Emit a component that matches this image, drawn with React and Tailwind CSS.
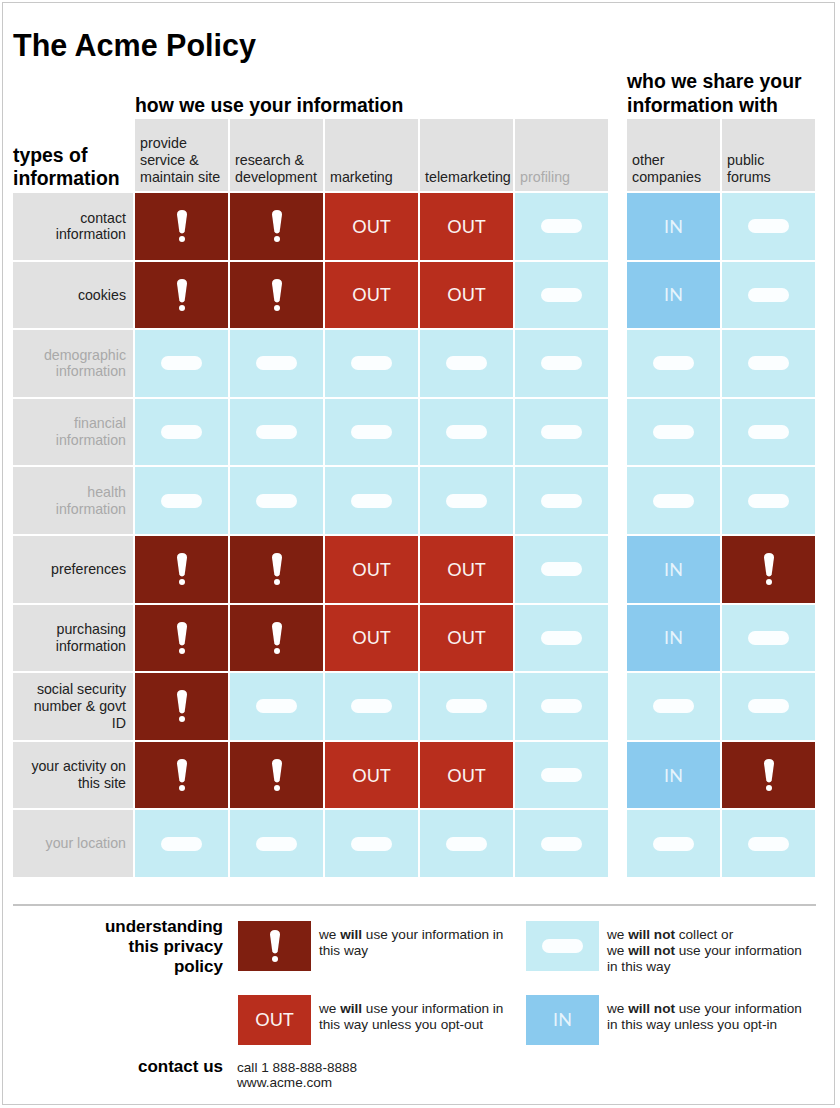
import React from 'react'

const X = 'x'
const O = 'out'
const I = 'in'
const N = '-'

const columns = [
  { lines: ['provide', 'service &', 'maintain site'] },
  { lines: ['research &', 'development'] },
  { lines: ['marketing'] },
  { lines: ['telemarketing'] },
  { lines: ['profiling'], muted: true },
  null,
  { lines: ['other', 'companies'] },
  { lines: ['public', 'forums'] },
]

const rows = [
  { lines: ['contact', 'information'], cells: [X, X, O, O, N, I, N] },
  { lines: ['cookies'], cells: [X, X, O, O, N, I, N] },
  { lines: ['demographic', 'information'], muted: true, cells: [N, N, N, N, N, N, N] },
  { lines: ['financial', 'information'], muted: true, cells: [N, N, N, N, N, N, N] },
  { lines: ['health', 'information'], muted: true, cells: [N, N, N, N, N, N, N] },
  { lines: ['preferences'], cells: [X, X, O, O, N, I, X] },
  { lines: ['purchasing', 'information'], cells: [X, X, O, O, N, I, N] },
  { lines: ['social security', 'number & govt', 'ID'], cells: [X, N, N, N, N, N, N] },
  { lines: ['your activity on', 'this site'], cells: [X, X, O, O, N, I, X] },
  { lines: ['your location'], muted: true, cells: [N, N, N, N, N, N, N] },
]

function Bang() {
  return (
    <svg width="12" height="32" viewBox="0 0 12 32" className="block">
      <path d="M1 4.5 Q1 0 6 0 Q11 0 11 4.5 L8.7 21.6 Q8.4 23.4 6 23.4 Q3.6 23.4 3.3 21.6 Z" fill="#ffffff" />
      <circle cx="6" cy="29" r="3" fill="#ffffff" />
    </svg>
  )
}

function Pill() {
  return <div className="w-[41px] h-[14px] rounded-[7px] bg-[#fbfeff]" />
}

function Cell({ kind, className = '' }) {
  if (kind === X) {
    return (
      <div className={`bg-[#7f1f10] flex items-center justify-center ${className}`}>
        <Bang />
      </div>
    )
  }
  if (kind === O) {
    return (
      <div className={`bg-[#b82e1d] flex items-center justify-center text-[18px] text-[#fbf3f1] font-['Lato',sans-serif] ${className}`}>
        OUT
      </div>
    )
  }
  if (kind === I) {
    return (
      <div className={`bg-[#8acaee] flex items-center justify-center text-[18px] text-[#e6f4fc] font-['Lato',sans-serif] ${className}`}>
        IN
      </div>
    )
  }
  return (
    <div className={`bg-[#c5ecf4] flex items-center justify-center ${className}`}>
      <Pill />
    </div>
  )
}

function Lines({ lines }) {
  return lines.map((l, i) => (
    <div key={i} className="whitespace-nowrap">
      {l}
    </div>
  ))
}

export default function App() {
  return (
    <div className="w-[840px] h-[1108px] bg-white p-[2px] font-['Liberation_Sans',Arial,sans-serif] text-[#222]">
      <div className="w-[833px] h-[1103px] border border-[#c8c8c8] pl-[10px] pt-[26px]">
        <h1 className="text-[30.5px] leading-[32px] font-bold text-black">The Acme Policy</h1>

        {/* the matrix */}
        <div className="mt-[8px] grid grid-cols-[120px_repeat(5,93px)_15px_repeat(2,93px)] gap-[2px] w-[802px]">
          <div className="col-start-2 col-span-5 self-end text-[19.4px] leading-[24px] font-bold text-black whitespace-nowrap">
            how we use your information
          </div>
          <div className="col-start-8 col-span-2 text-[19.4px] leading-[24px] font-bold text-black whitespace-nowrap">
            who we share your
            <br />
            information with
          </div>

          {/* header row */}
          <div className="h-[72px] flex flex-col justify-end pb-[1px] text-[19.4px] leading-[23px] font-bold text-black">
            <div>types of</div>
            <div>information</div>
          </div>
          {columns.map((c, i) =>
            c ? (
              <div
                key={i}
                className={`h-[72px] bg-[#e1e1e1] flex flex-col justify-end pl-[5px] pb-[5px] text-[14.3px] leading-[17px] ${c.muted ? 'text-[#ababab]' : 'text-[#222]'}`}
              >
                <Lines lines={c.lines} />
              </div>
            ) : (
              <div key={i} />
            )
          )}

          {rows.map((r, ri) => (
            <React.Fragment key={ri}>
              <div
                className={`h-[66.6px] bg-[#e1e1e1] flex flex-col justify-center items-end text-right pr-[7px] text-[14.2px] leading-[16.7px] ${r.muted ? 'text-[#a9a9a9]' : 'text-[#222]'}`}
              >
                <Lines lines={r.lines} />
              </div>
              {r.cells.slice(0, 5).map((k, ci) => (
                <Cell key={ci} kind={k} className="h-[66.6px]" />
              ))}
              <div />
              {r.cells.slice(5).map((k, ci) => (
                <Cell key={'s' + ci} kind={k} className="h-[66.6px]" />
              ))}
            </React.Fragment>
          ))}
        </div>

        <div className="mt-[27px] h-[2px] w-[803px] bg-[#c4c4c4]" />

        {/* legend */}
        <div className="mt-[11px] flex items-start">
          <div className="w-[210px] text-right text-[17px] leading-[20px] font-bold text-black">
            understanding
            <br />
            this privacy
            <br />
            policy
          </div>
          <Cell kind={X} className="ml-[15px] mt-[4px] w-[73px] h-[50px]" />
          <div className="ml-[8px] mt-[10px] w-[199px] text-[13.6px] leading-[16px]">
            we <b>will</b> use your information in
            <br />
            this way
          </div>
          <Cell kind={N} className="ml-[8px] mt-[4px] w-[73px] h-[50px]" />
          <div className="ml-[8px] mt-[10px] text-[13.6px] leading-[16px]">
            we <b>will not</b> collect or
            <br />
            we <b>will not</b> use your information
            <br />
            in this way
          </div>
        </div>

        <div className="mt-[18px] flex items-start">
          <div className="w-[210px]" />
          <Cell kind={O} className="ml-[15px] w-[73px] h-[50px]" />
          <div className="ml-[8px] mt-[6px] w-[199px] text-[13.6px] leading-[16px]">
            we <b>will</b> use your information in
            <br />
            this way unless you opt-out
          </div>
          <Cell kind={I} className="ml-[8px] w-[73px] h-[50px]" />
          <div className="ml-[8px] mt-[6px] text-[13.6px] leading-[16px]">
            we <b>will not</b> use your information
            <br />
            in this way unless you opt-in
          </div>
        </div>

        <div className="mt-[12px] flex items-start">
          <div className="w-[210px] text-right text-[17px] leading-[20px] font-bold text-black">contact us</div>
          <div className="ml-[14px] mt-[3.5px] text-[13.6px] leading-[15px]">
            call 1 888-888-8888
            <br />
            www.acme.com
          </div>
        </div>
      </div>
    </div>
  )
}
